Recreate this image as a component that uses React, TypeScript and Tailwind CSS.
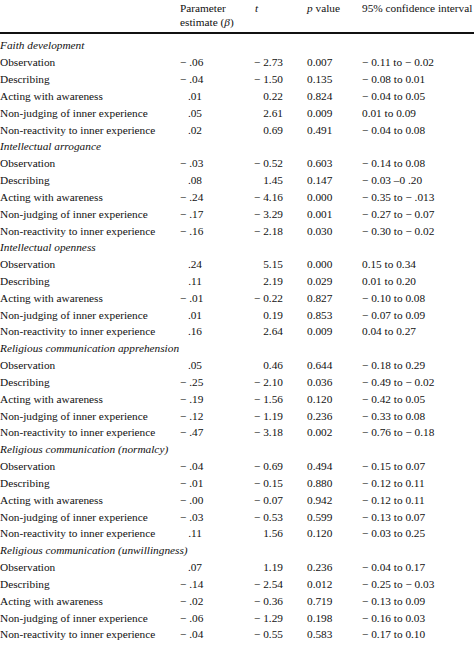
const M = '\u2212';

type Row = [string, string, string, string, string];

const labels = [
  'Observation',
  'Describing',
  'Acting with awareness',
  'Non-judging of inner experience',
  'Non-reactivity to inner experience',
];

const groups: { title: string; rows: Row[] }[] = [
  {
    title: 'Faith development',
    rows: [
      [labels[0], `${M} .06`, `${M} 2.73`, '0.007', `${M} 0.11 to ${M} 0.02`],
      [labels[1], `${M} .04`, `${M} 1.50`, '0.135', `${M} 0.08 to 0.01`],
      [labels[2], '.01', '0.22', '0.824', `${M} 0.04 to 0.05`],
      [labels[3], '.05', '2.61', '0.009', '0.01 to 0.09'],
      [labels[4], '.02', '0.69', '0.491', `${M} 0.04 to 0.08`],
    ],
  },
  {
    title: 'Intellectual arrogance',
    rows: [
      [labels[0], `${M} .03`, `${M} 0.52`, '0.603', `${M} 0.14 to 0.08`],
      [labels[1], '.08', '1.45', '0.147', `${M} 0.03 \u20130 .20`],
      [labels[2], `${M} .24`, `${M} 4.16`, '0.000', `${M} 0.35 to ${M} .013`],
      [labels[3], `${M} .17`, `${M} 3.29`, '0.001', `${M} 0.27 to ${M} 0.07`],
      [labels[4], `${M} .16`, `${M} 2.18`, '0.030', `${M} 0.30 to ${M} 0.02`],
    ],
  },
  {
    title: 'Intellectual openness',
    rows: [
      [labels[0], '.24', '5.15', '0.000', '0.15 to 0.34'],
      [labels[1], '.11', '2.19', '0.029', '0.01 to 0.20'],
      [labels[2], `${M} .01`, `${M} 0.22`, '0.827', `${M} 0.10 to 0.08`],
      [labels[3], '.01', '0.19', '0.853', `${M} 0.07 to 0.09`],
      [labels[4], '.16', '2.64', '0.009', '0.04 to 0.27'],
    ],
  },
  {
    title: 'Religious communication apprehension',
    rows: [
      [labels[0], '.05', '0.46', '0.644', `${M} 0.18 to 0.29`],
      [labels[1], `${M} .25`, `${M} 2.10`, '0.036', `${M} 0.49 to ${M} 0.02`],
      [labels[2], `${M} .19`, `${M} 1.56`, '0.120', `${M} 0.42 to 0.05`],
      [labels[3], `${M} .12`, `${M} 1.19`, '0.236', `${M} 0.33 to 0.08`],
      [labels[4], `${M} .47`, `${M} 3.18`, '0.002', `${M} 0.76 to ${M} 0.18`],
    ],
  },
  {
    title: 'Religious communication (normalcy)',
    rows: [
      [labels[0], `${M} .04`, `${M} 0.69`, '0.494', `${M} 0.15 to 0.07`],
      [labels[1], `${M} .01`, `${M} 0.15`, '0.880', `${M} 0.12 to 0.11`],
      [labels[2], `${M} .00`, `${M} 0.07`, '0.942', `${M} 0.12 to 0.11`],
      [labels[3], `${M} .03`, `${M} 0.53`, '0.599', `${M} 0.13 to 0.07`],
      [labels[4], '.11', '1.56', '0.120', `${M} 0.03 to 0.25`],
    ],
  },
  {
    title: 'Religious communication (unwillingness)',
    rows: [
      [labels[0], '.07', '1.19', '0.236', `${M} 0.04 to 0.17`],
      [labels[1], `${M} .14`, `${M} 2.54`, '0.012', `${M} 0.25 to ${M} 0.03`],
      [labels[2], `${M} .02`, `${M} 0.36`, '0.719', `${M} 0.13 to 0.09`],
      [labels[3], `${M} .06`, `${M} 1.29`, '0.198', `${M} 0.16 to 0.03`],
      [labels[4], `${M} .04`, `${M} 0.55`, '0.583', `${M} 0.17 to 0.10`],
    ],
  },
];

const grid = 'grid grid-cols-[180px_22px_81px_79px_1fr] whitespace-nowrap';

function DataRow({ row }: { row: Row }) {
  const [label, beta, t, p, ci] = row;
  return (
    <div className={`${grid} h-[16.83px] items-center`}>
      <span>{label}</span>
      <span className="text-right">{beta}</span>
      <span className="text-right">{t}</span>
      <span className="pl-[24px]">{p}</span>
      <span>{ci}</span>
    </div>
  );
}

export default function App() {
  return (
    <div className="h-[651px] w-[474px] overflow-hidden bg-white font-[family-name:'Liberation_Serif','Times_New_Roman',serif] text-[11.3px] text-[#111]">
      <div className={`${grid} h-[34px] border-b-2 border-[#111] pt-[2px] leading-[13.6px]`}>
        <span />
        <span className="overflow-visible">
          Parameter
          <br />
          estimate (<i>β</i>)
        </span>
        <span className="pl-[53px] italic">t</span>
        <span className="pl-[24px]">
          <i>p</i> value
        </span>
        <span>95% confidence interval</span>
      </div>
      <div className="pt-[3.4px] leading-[16.83px]">
        {groups.map((g) => (
          <div key={g.title}>
            <div className="h-[16.83px] italic whitespace-nowrap">{g.title}</div>
            {g.rows.map((r) => (
              <DataRow key={g.title + r[0]} row={r} />
            ))}
          </div>
        ))}
      </div>
    </div>
  );
}
